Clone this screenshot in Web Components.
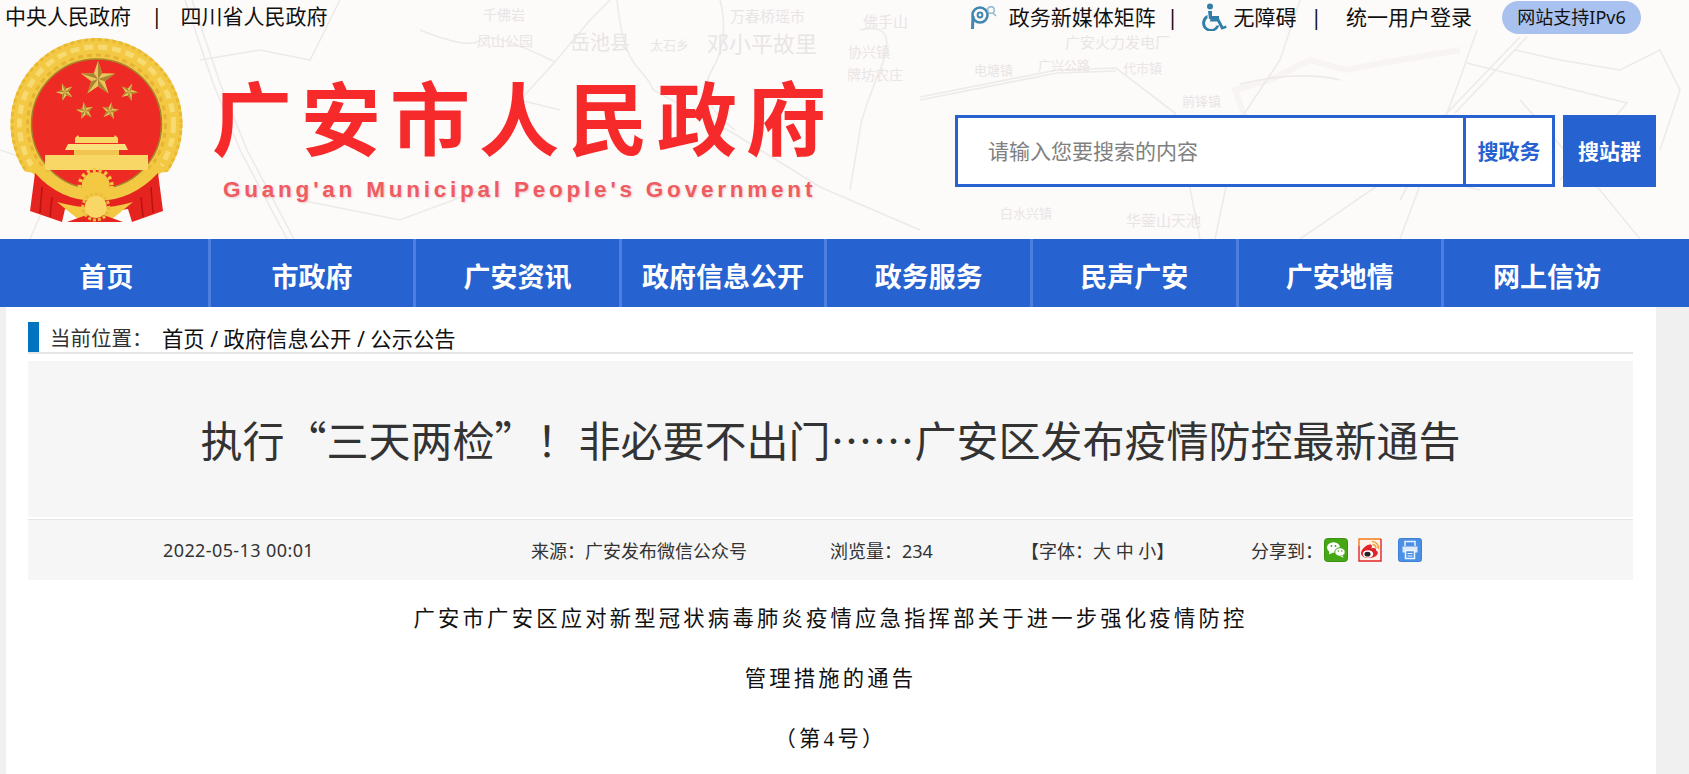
<!DOCTYPE html>
<html lang="zh-CN">
<head>
<meta charset="utf-8">
<title>广安市人民政府</title>
<style>
  html, body { margin: 0; height: 100%; overflow: hidden; }
  body {
    background: #f0f0f0;
    color: #333;
    font-family: "Noto Sans", "Noto Sans CJK SC", sans-serif;
  }
  a { color: inherit; text-decoration: none; }
</style>
</head>
<body>
<gov-header>
  <gov-topbar></gov-topbar>
  <gov-brand></gov-brand>
</gov-header>
<gov-nav>
  <gov-nav-item>首页</gov-nav-item>
  <gov-nav-item>市政府</gov-nav-item>
  <gov-nav-item>广安资讯</gov-nav-item>
  <gov-nav-item>政府信息公开</gov-nav-item>
  <gov-nav-item>政务服务</gov-nav-item>
  <gov-nav-item>民声广安</gov-nav-item>
  <gov-nav-item>广安地情</gov-nav-item>
  <gov-nav-item last>网上信访</gov-nav-item>
</gov-nav>
<gov-page>
  <gov-crumb>首页 / 政府信息公开 / 公示公告</gov-crumb>
  <gov-title>执行“三天两检”！非必要不出门……广安区发布疫情防控最新通告</gov-title>
  <gov-meta></gov-meta>
  <gov-para>广安市广安区应对新型冠状病毒肺炎疫情应急指挥部关于进一步强化疫情防控</gov-para>
  <gov-para>管理措施的通告</gov-para>
  <gov-para>（第4号）</gov-para>
</gov-page>

<script>
class GovHeader extends HTMLElement {
  connectedCallback() {
    const labels = [
      [483, 20, 14, "千佛岩"], [477, 46, 14, "凤山公园"], [570, 50, 20, "岳池县"],
      [730, 22, 15, "万春桥瑶市"], [707, 52, 22, "邓小平故里"], [650, 50, 13, "太石乡"],
      [863, 27, 15, "佛手山"],
      [848, 57, 14, "协兴镇"], [847, 80, 14, "牌坊农庄"], [1065, 48, 15, "广安火力发电厂"],
      [974, 75, 13, "电塘镇"], [1038, 70, 13, "广兴公路"], [1123, 73, 13, "代市镇"],
      [1182, 106, 13, "前锋镇"], [1000, 218, 13, "白水兴镇"], [1126, 226, 15, "华蓥山天池"]
    ].map(([x, y, s, t]) => `<text x="${x}" y="${y}" font-size="${s}">${t}</text>`).join("");

    const shadow = this.attachShadow({ mode: "open" });
    shadow.innerHTML = `
      <style>
        :host { display: block; position: relative; height: 239px; background: #fdfafa; overflow: hidden; }
        .map { position: absolute; inset: 0; }
        .map text { fill: #e9e5e5; font-family: "Noto Sans CJK SC", sans-serif; }
        .layer { position: relative; }
      </style>
      <svg class="map" width="1689" height="239" viewBox="0 0 1689 239" fill="none" stroke="#eeeaea" stroke-width="1.6" aria-hidden="true">
        <path d="M185 0 213 83 240 150 287 239M192 0 220 83 247 150 294 239"/>
        <path d="M617 0Q622 50 637 67T653 90L733 133 820 187 920 230"/>
        <path d="M420 30Q470 50 480 40T555 62L590 20 610 0"/>
        <path d="M555 62 520 100 560 110M720 0Q730 40 712 70T735 130"/>
        <path d="M860 30Q900 20 880 70T860 130L850 190"/>
        <path d="M920 97 1057 70 1116 68 1175 113 1200 239M920 100 1057 73 1116 71"/>
        <path d="M1250 130 1235 90 1270 80 1310 60 1345 70 1400 60 1460 50" stroke-width="6" stroke="#f8f4f3"/>
        <path d="M1477 30 1457 87 1447 113 1400 239M1520 37 1447 113 1400 200M1527 37 1455 113"/>
        <path d="M1467 63 1627 103 1560 180M1515 50 1560 60 1620 70 1660 50 1680 90 1660 150"/>
        <path d="M1240 84Q1300 70 1340 80M1300 0 1280 60 1240 120 1215 239"/>
        <path d="M1520 100 1600 190 1640 239M1300 239 1400 170 1480 190"/>
        <path d="M0 150 60 170 30 239M340 0 310 60 260 50 200 60M300 200 400 220 480 190"/>
        <g stroke="none">${labels}</g>
      </svg>
      <div class="layer"><slot></slot></div>
    `;
  }
}

class GovTopbar extends HTMLElement {
  connectedCallback() {
    const shadow = this.attachShadow({ mode: "open" });
    shadow.innerHTML = `
      <style>
        :host { display: flex; align-items: flex-start; height: 36px; font-size: 21px; line-height: 33px; color: #111; padding-left: 5px; }
        .sep { color: #111; }
        .links { display: flex; align-items: center; margin-left: auto; margin-right: 48px; }
        .pill { display: block; width: 139px; height: 33px; margin: 1px 0 0 30px; border-radius: 17px; background: #a9c1ee; font-size: 18px; line-height: 33px; text-align: center; }
        svg { display: block; flex: none; }
      </style>
      <span>中央人民政府</span>
      <span class="sep" style="margin-left:20px">|</span>
      <span style="margin-left:18px">四川省人民政府</span>
      <div class="links">
        <svg width="27" height="26" viewBox="0 0 27 26" fill="none" stroke="#3f87ad">
          <circle cx="10" cy="11" r="7.5" stroke-width="2.6"/>
          <circle cx="10" cy="11" r="2.4" stroke-width="2"/>
          <path d="M3 12 2.500 25" stroke-width="3"/>
          <circle cx="21" cy="6" r="3.300" stroke="#8fb6cc" stroke-width="1.400"/>
          <path d="M23 9 26 12" stroke="#8fb6cc" stroke-width="1.400"/>
        </svg>
        <span style="margin-left:12px">政务新媒体矩阵</span>
        <span class="sep" style="margin-left:11px">|</span>
        <svg style="margin-left:23px" width="26" height="28" viewBox="0 0 26 28" fill="#2f7fa8">
          <circle cx="9" cy="3.500" r="3"/>
          <path d="M7 8h4v5h7v3h-8l-2 0z"/>
          <path d="M9.500 15.500h8.500l4.200 8 2.600-1 1 2.300-5.300 2-4.200-8.300H9z"/>
          <path d="M6.500 12v3.200A6 6 0 1 0 15.500 22.500h2.700A8.700 8.700 0 1 1 6.500 12z"/>
        </svg>
        <span style="margin-left:6px">无障碍</span>
        <span class="sep" style="margin-left:14px">|</span>
        <span style="margin-left:24px">统一用户登录</span>
        <a class="pill">网站支持IPv6</a>
      </div>
    `;
  }
}

class GovEmblem extends HTMLElement {
  star(x, y, r, rot) {
    const pts = [];
    for (let i = 0; i < 10; i++) {
      const rad = i % 2 ? r * 0.4 : r;
      const a = (rot + i * 36 - 90) * Math.PI / 180;
      pts.push([(x + rad * Math.cos(a)).toFixed(1), (y + rad * Math.sin(a)).toFixed(1)]);
    }
    let out = `<polygon points="${pts.join(" ")}" fill="#e9c55a"/>`;
    for (let i = 0; i < 10; i += 2) {
      out += `<polygon points="${x},${y} ${pts[i]} ${pts[(i + 1) % 10]}" fill="#a98432"/>`;
    }
    return out;
  }

  connectedCallback() {
    const shadow = this.attachShadow({ mode: "open" });
    shadow.innerHTML = `
      <style>
        :host { display: block; flex: none; width: 174px; height: 186px; margin: 1px 0 0 10px; }
        svg { display: block; }
      </style>
      <svg width="174" height="186" viewBox="0 0 174 186">
        <defs>
          <clipPath id="above"><path d="M0 0H174V132L149 136Q122 165 86 165T24 136L0 132Z"/></clipPath>
        </defs>
        <g clip-path="url(#above)">
          <circle cx="86.500" cy="87" r="75.500" fill="none" stroke="#f3c944" stroke-width="21"/>
          <circle cx="86.500" cy="87" r="84.500" fill="none" stroke="#e9b935" stroke-width="3" stroke-dasharray="4 3"/>
          <circle cx="86.500" cy="87" r="77" fill="none" stroke="#f8da72" stroke-width="5" stroke-dasharray="9 5"/>
          <circle cx="86.500" cy="87" r="69" fill="none" stroke="#e6b334" stroke-width="3" stroke-dasharray="5 4"/>
        </g>
        <circle cx="86.500" cy="87" r="65" fill="#ee2a24" stroke="#a6822c" stroke-width="1.500"/>
        ${this.star(88, 42, 18, 0)}
        ${this.star(55, 55, 9, -20)}
        ${this.star(119, 55, 9, 20)}
        ${this.star(75, 74, 9, -10)}
        ${this.star(100, 74, 9, 10)}
        <path d="M65 101l3-3 1 2h35l1-2 3 3v5H65z" fill="#f8d766"/>
        <path d="M58 107H115L118 113H55z" fill="#fbe17e"/>
        <path d="M64 113H109V118H64z" fill="#f0c650"/>
        <path d="M35 118H138V133H35z" fill="#f8d766"/>
        <path d="M22 128Q50 158 86 158T151 128" fill="none" stroke="#f3c944" stroke-width="11"/>
        <circle cx="85.700" cy="149" r="14" fill="#f3c944"/>
        <circle cx="85.700" cy="149" r="16" fill="none" stroke="#f3c944" stroke-width="4" stroke-dasharray="3 3"/>
        <path d="M25 136Q50 164 86 164T148 136L153 174 122 185 118 172Q86 178 55 172L52 185 20 174Z" fill="#e5231f"/>
        <path d="M32 150 30 176M42 160 40 180M141 150 143 176M131 160 133 180" stroke="#b8140f" stroke-width="1.500" fill="none"/>
        <path d="M47 165Q86 176 123 165L102 182H68Z" fill="#f3c944"/>
        <path d="M57 185 85 175 113 185Z" fill="#e5231f"/>
        <circle cx="85.700" cy="170" r="11" fill="#f8d766"/>
        <circle cx="85.700" cy="170" r="13" fill="none" stroke="#eabb3c" stroke-width="3" stroke-dasharray="3 2"/>
      </svg>
    `;
  }
}

class GovBrand extends HTMLElement {
  connectedCallback() {
    const shadow = this.attachShadow({ mode: "open" });
    shadow.innerHTML = `
      <style>
        :host { display: flex; align-items: flex-start; height: 203px; }
        .names { margin: 45px 0 0 28px; }
        h1 { margin: 0; font: 700 80px/66px "Noto Sans CJK SC", sans-serif; letter-spacing: 9px; color: #f62a2a; white-space: nowrap; }
        p { margin: 30px 0 0 11px; font: 700 22.500px/26px "Liberation Sans", sans-serif; letter-spacing: 3.780px; color: #ee5c62; text-shadow: 1px 1px 2px #e9c9c9; white-space: nowrap; }
        gov-search { margin: 79px 33px 0 auto; }
      </style>
      <gov-emblem></gov-emblem>
      <div class="names">
        <h1>广安市人民政府</h1>
        <p>Guang'an Municipal People's Government</p>
      </div>
      <gov-search></gov-search>
    `;
  }
}

class GovSearch extends HTMLElement {
  connectedCallback() {
    const shadow = this.attachShadow({ mode: "open" });
    shadow.innerHTML = `
      <style>
        :host { display: flex; gap: 8px; height: 72px; font-size: 21px; }
        .box { display: flex; width: 600px; box-sizing: border-box; border: 3px solid #2762d1; background: #fff; }
        .hint { flex: 1; padding-left: 30px; line-height: 66px; color: #808080; }
        .inner { flex: none; width: 86px; border-left: 3px solid #2762d1; font-weight: 700; line-height: 66px; text-align: center; color: #2762d1; }
        .outer { width: 93px; background: #2762d1; color: #fff; font-weight: 700; line-height: 72px; text-align: center; }
      </style>
      <div class="box">
        <span class="hint">请输入您要搜索的内容</span>
        <span class="inner">搜政务</span>
      </div>
      <span class="outer">搜站群</span>
    `;
  }
}

class GovNav extends HTMLElement {
  connectedCallback() {
    const shadow = this.attachShadow({ mode: "open" });
    shadow.innerHTML = `
      <style>
        :host { display: grid; grid-template-columns: repeat(8, 205.600px); height: 68px; padding-left: 5px; background: #2762d1; }
      </style>
      <slot></slot>
    `;
  }
}

class GovNavItem extends HTMLElement {
  connectedCallback() {
    const shadow = this.attachShadow({ mode: "open" });
    shadow.innerHTML = `
      <style>
        :host { display: block; box-sizing: border-box; padding-top: 8px; border-right: 3px solid #4d7fdf; color: #fff; font-size: 27px; font-weight: 700; line-height: 60px; text-align: center; }
        :host([last]) { border-right: 0; }
      </style>
      <slot></slot>
    `;
  }
}

class GovPage extends HTMLElement {
  connectedCallback() {
    const shadow = this.attachShadow({ mode: "open" });
    shadow.innerHTML = `
      <style>
        :host { display: block; box-sizing: border-box; width: 1650px; height: 467px; margin-left: 6px; padding: 15px 23px 0 22px; background: #fff; }
      </style>
      <slot></slot>
    `;
  }
}

class GovCrumb extends HTMLElement {
  connectedCallback() {
    const shadow = this.attachShadow({ mode: "open" });
    shadow.innerHTML = `
      <style>
        :host { display: flex; height: 30px; border-bottom: 2px solid #e5e5e5; margin-bottom: 7px; font-size: 20.500px; line-height: 33px; white-space: nowrap; }
        .bar { flex: none; width: 11px; height: 30px; background: #0273bf; }
        .label { margin-left: 11px; width: 112px; color: #333; }
        .path { color: #111; font-size: 21.300px; }
      </style>
      <span class="bar"></span>
      <span class="label">当前位置：</span>
      <span class="path"><slot></slot></span>
    `;
  }
}

class GovTitle extends HTMLElement {
  connectedCallback() {
    const shadow = this.attachShadow({ mode: "open" });
    shadow.innerHTML = `
      <style>
        :host { display: block; height: 156px; background: #f6f6f6; color: #333; font: 400 42px/156px "Noto Sans CJK SC", sans-serif; text-align: center; white-space: nowrap; }
      </style>
      <slot></slot>
    `;
  }
}

class GovMeta extends HTMLElement {
  connectedCallback() {
    const shadow = this.attachShadow({ mode: "open" });
    shadow.innerHTML = `
      <style>
        :host { display: flex; align-items: center; box-sizing: border-box; height: 61px; margin: 2px 0 9px; border-top: 1px solid #e5e5e5; padding-left: 135px; background: #f6f6f6; font-size: 18px; color: #333; white-space: nowrap; }
        .icons { display: flex; margin-left: 1px; }
        svg { display: block; flex: none; }
      </style>
      <span style="width:368px;letter-spacing:.4px">2022-05-13 00:01</span>
      <span style="width:299px">来源：广安发布微信公众号</span>
      <span style="width:191px">浏览量：234</span>
      <span style="width:230px">【字体：大 中 小】</span>
      <span>分享到：</span>
      <div class="icons">
        <svg width="24" height="24" viewBox="0 0 24 24">
          <rect x=".5" y=".5" width="23" height="23" rx="3" fill="#46a716" stroke="#3a9211"/>
          <ellipse cx="9.500" cy="9.500" rx="6.500" ry="5.200" fill="#fff"/>
          <path d="M5.500 13 5 16.500 9 14.500z" fill="#fff"/>
          <ellipse cx="16" cy="14" rx="5.200" ry="4.300" fill="#fff" stroke="#46a716"/>
          <path d="M18.500 17.500 19.500 20 16.500 18z" fill="#fff"/>
          <circle cx="7.500" cy="8" r=".9" fill="#46a716"/><circle cx="11.500" cy="8" r=".9" fill="#46a716"/>
          <circle cx="14.300" cy="13" r=".8" fill="#46a716"/><circle cx="17.700" cy="13" r=".8" fill="#46a716"/>
        </svg>
        <svg style="margin-left:10px" width="24" height="24" viewBox="0 0 24 24" fill="none">
          <rect x=".7" y=".7" width="22.600" height="22.600" rx="2" fill="#fdf3ea"/>
          <path d="M1 8V1H23" stroke="#f07c1e" stroke-width="1.400"/>
          <path d="M23 1V23H1V8" stroke="#e3232a" stroke-width="1.400"/>
          <path d="M3 15.500C3 11 9 6 12.500 6.500 14.500 7 14 9 13.500 10.500 16 9.500 18.500 10 18 12.500 20 13.500 20.500 15 19 17 16 21 4 21.500 3 15.500Z" fill="#e3232a"/>
          <ellipse cx="10" cy="16" rx="5.200" ry="3.800" fill="#fff"/>
          <ellipse cx="9.500" cy="16.200" rx="3" ry="2.400" fill="#222"/>
          <path d="M14 3.500A6.500 6.500 0 0 1 20.500 11M14.500 6.500A3.500 3.500 0 0 1 18 10" stroke="#f2a23b" stroke-width="1.700"/>
        </svg>
        <svg style="margin-left:16px" width="24" height="24" viewBox="0 0 24 24" fill="none">
          <rect x=".5" y=".5" width="23" height="23" rx="2" fill="#4a90e6" stroke="#3f7fd6"/>
          <path d="M7 8V3.500H17V8" stroke="#e6f0fc" stroke-width="1.500"/>
          <path d="M4.500 8.500H19.500V14.500H4.500Z" fill="#dbe9fb"/>
          <path d="M7.500 12.500H16.500V20.500H7.500Z" fill="#4a90e6" stroke="#eef5fd" stroke-width="1.500"/>
          <path d="M9.500 15.500H14.500M9.500 18H14.500" stroke="#eef5fd" stroke-width="1.200"/>
        </svg>
      </div>
    `;
  }
}

class GovPara extends HTMLElement {
  connectedCallback() {
    const shadow = this.attachShadow({ mode: "open" });
    shadow.innerHTML = `
      <style>
        :host { display: block; color: #111; font: 400 21.330px/60px "Liberation Serif", "Noto Sans CJK SC", serif; letter-spacing: 3.200px; text-align: center; white-space: nowrap; }
      </style>
      <slot></slot>
    `;
  }
}

customElements.define("gov-header", GovHeader);
customElements.define("gov-topbar", GovTopbar);
customElements.define("gov-emblem", GovEmblem);
customElements.define("gov-brand", GovBrand);
customElements.define("gov-search", GovSearch);
customElements.define("gov-nav", GovNav);
customElements.define("gov-nav-item", GovNavItem);
customElements.define("gov-page", GovPage);
customElements.define("gov-crumb", GovCrumb);
customElements.define("gov-title", GovTitle);
customElements.define("gov-meta", GovMeta);
customElements.define("gov-para", GovPara);
</script>
</body>
</html>
